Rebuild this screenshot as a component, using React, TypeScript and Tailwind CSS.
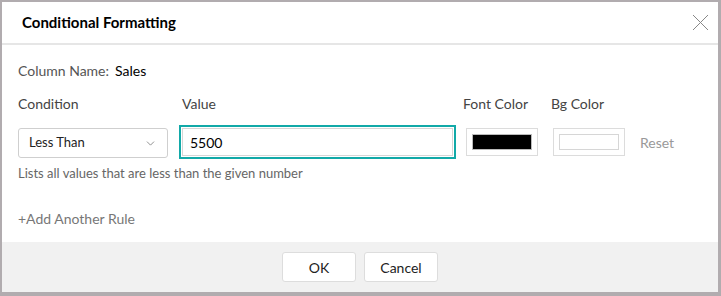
import { ChevronDown } from "lucide-react";

export default function App() {
    return (
        <div className="h-[296px] w-[721px] bg-[#b1acaf] pt-[2px] pl-[2px] pr-[3px] pb-[4px] font-['Lato',sans-serif]">
            <div className="flex h-full flex-col bg-white">
                <div className="flex h-[43px] items-center justify-between border-b-2 border-[#e6e6e6] pl-[20px] pr-[9px]">
                    <h1 className="text-[15px] font-bold text-black">Conditional Formatting</h1>
                    <svg width="17" height="17" viewBox="0 0 17 17" className="text-[#888]">
                        <path d="M1 1L16 16M16 1L1 16" stroke="currentColor" strokeWidth="1" fill="none" />
                    </svg>
                </div>
                <div className="flex-1 px-[16px] pt-[17px]">
                    <div className="flex items-center text-[14px] leading-[18px]">
                        <span className="text-[#555]">Column Name:</span>
                        <span className="ml-[6px] text-black">Sales</span>
                    </div>
                    <div className="mt-[15px] flex text-[14px] leading-[18px] text-[#444]">
                        <span className="w-[164px]">Condition</span>
                        <span className="w-[281px]">Value</span>
                        <span className="w-[88px]">Font Color</span>
                        <span>Bg Color</span>
                    </div>
                    <div className="mt-[12px] flex items-center">
                        <div className="mt-[2px] flex h-[30px] w-[150px] items-center justify-between rounded-[3px] border border-[#cfcfcf] pl-[10px] pr-[10px] text-[13px] text-[#222]">
                            <span>Less Than</span>
                            <ChevronDown className="h-[13px] w-[13px] text-[#777]" strokeWidth={1.5} />
                        </div>
                        <div className="ml-[11px] h-[34px] w-[277px] border-2 border-[#12a9a8] p-[1px]">
                            <div className="flex h-full items-center border border-[#d6d6d6] pl-[7px] text-[14px] text-black">5500</div>
                        </div>
                        <div className="ml-[10px] h-[28px] w-[72px] border border-[#dcdcdc] p-[5px]">
                            <div className="h-full w-full border border-[#bbb] bg-black" />
                        </div>
                        <div className="ml-[15px] h-[28px] w-[72px] border border-[#dcdcdc] p-[5px]">
                            <div className="h-full w-full border border-[#d6d6d6] bg-white" />
                        </div>
                        <span className="ml-[15px] text-[14px] text-[#999]">Reset</span>
                    </div>
                    <p className="mt-[6px] text-[13px] leading-4 text-[#666]">Lists all values that are less than the given number</p>
                    <p className="mt-[29px] text-[14px] leading-[18px] text-[#777]">+Add Another Rule</p>
                </div>
                <div className="flex h-[50px] items-center justify-center gap-[8px] bg-[#f1f1f1]">
                    <button type="button" className="h-[30px] w-[74px] rounded-[3px] border border-[#ddd] bg-white text-[14px] text-[#222]">OK</button>
                    <button type="button" className="h-[30px] w-[74px] rounded-[3px] border border-[#ddd] bg-white text-[14px] text-[#222]">Cancel</button>
                </div>
            </div>
        </div>
    );
}
